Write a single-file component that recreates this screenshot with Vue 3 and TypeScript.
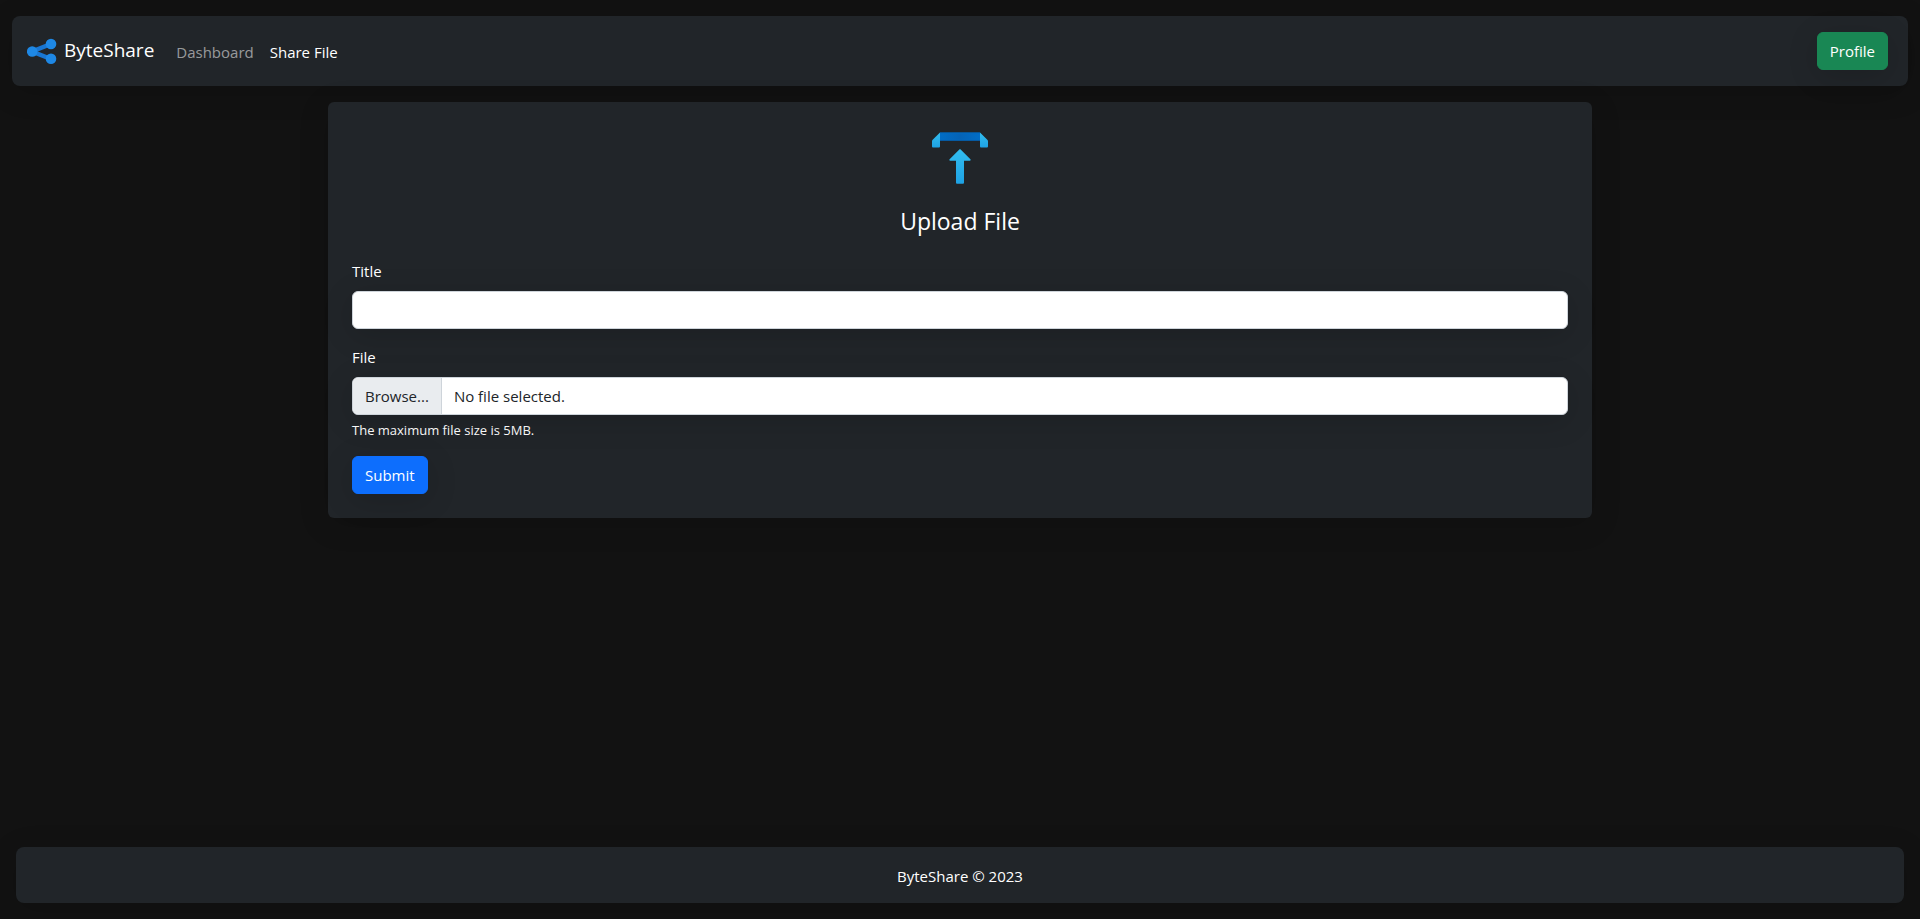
<script setup lang="ts">
import { computed, ref } from 'vue'

interface NavItem {
  label: string
  active: boolean
}

const navItems: NavItem[] = [
  { label: 'Dashboard', active: false },
  { label: 'Share File', active: true },
]

const title = ref('')
const fileName = ref('')
const fileText = computed(() => fileName.value || 'No file selected.')

function onFileChange(event: Event) {
  const input = event.target as HTMLInputElement
  fileName.value = input.files?.[0]?.name ?? ''
}
</script>

<template>
  <div class="page">
    <header class="navbar shadow">
      <a class="brand" href="#">
        <svg class="brand-icon" viewBox="0 0 30 26" aria-hidden="true">
          <path d="M24 6 5 13.500l19 7.500" fill="none" stroke="#1976d2" stroke-width="4.5" />
          <g fill="#1e88e5">
            <circle cx="5.2" cy="13.5" r="5.3" />
            <circle cx="24" cy="6" r="5.3" />
            <circle cx="24" cy="20.7" r="5.3" />
          </g>
        </svg>
        <span>ByteShare</span>
      </a>
      <nav class="nav">
        <a
          v-for="item in navItems"
          :key="item.label"
          class="nav-link"
          :class="{ active: item.active }"
          href="#"
        >{{ item.label }}</a>
      </nav>
      <button class="btn btn-success shadow" type="button">Profile</button>
    </header>

    <main class="main">
      <section class="card shadow">
        <svg class="upload-icon" viewBox="0 0 64 64" aria-hidden="true">
          <defs>
            <linearGradient id="bar" x1="0" x2="1" y1="0" y2="0">
              <stop offset="0" stop-color="#0077d2" />
              <stop offset="0.5" stop-color="#0b59a2" />
              <stop offset="1" stop-color="#0077d2" />
            </linearGradient>
            <linearGradient id="wing" x1="0" x2="0" y1="0" y2="1">
              <stop offset="0" stop-color="#32bdef" />
              <stop offset="1" stop-color="#1ea2e4" />
            </linearGradient>
          </defs>
          <rect x="12" y="6.3" width="40" height="8.5" fill="#0168c0" />
          <rect x="12" y="7.5" width="40" height="6.3" fill="url(#bar)" opacity="0.35" />
          <path d="M12 6.5v13.8c0 .8-.5 1.3-1.3 1.3H5.3c-.8 0-1.3-.5-1.3-1.3V15.5c0-.7.2-1.2.7-1.7z" fill="url(#wing)" />
          <path d="M52 6.5v13.8c0 .8.5 1.3 1.3 1.3h5.4c.8 0 1.3-.5 1.3-1.3V15.5c0-.7-.2-1.2-.7-1.7z" fill="url(#wing)" />
          <path d="M31.1 23.7 21.6 33.2c-.6.6-.2 1.5.6 1.5H28v21.7c0 .8.5 1.3 1.3 1.3h5.4c.8 0 1.3-.5 1.3-1.3V34.7h5.8c.8 0 1.2-.9.6-1.5l-9.5-9.5c-.5-.5-1.3-.5-1.8 0z" fill="url(#wing)" />
        </svg>
        <h1 class="heading">Upload File</h1>
        <form class="form" @submit.prevent>
          <div class="field">
            <label for="title">Title</label>
            <input id="title" v-model="title" class="control shadow" type="text" />
          </div>
          <div class="field">
            <label for="file">File</label>
            <div class="control file-control shadow">
              <span class="file-button">Browse...</span>
              <span class="file-name">{{ fileText }}</span>
              <input
                id="file"
                class="file-input"
                type="file"
                aria-describedby="file-help"
                @change="onFileChange"
              />
            </div>
            <small id="file-help" class="help">The maximum file size is 5MB.</small>
          </div>
          <button class="btn btn-primary shadow" type="submit">Submit</button>
        </form>
      </section>
    </main>

    <footer class="footer shadow">ByteShare © 2023</footer>
  </div>
</template>

<style>
body {
  margin: 0;
  background: #121212;
}
</style>

<style scoped>
*,
*::before,
*::after {
  box-sizing: border-box;
}

.page {
  display: flex;
  flex-direction: column;
  min-height: 100vh;
  padding: 16px 12px;
  overflow: hidden;
  color: #fff;
  background: #121212;
  font-family: "Segoe UI", "Open Sans", "Noto Sans", sans-serif;
  font-size: 15px;
  line-height: 24px;
}

.shadow {
  box-shadow: 0 6px 30px rgba(0, 0, 0, 0.15);
}

.navbar {
  display: flex;
  align-items: center;
  padding: 16px 20px 16px 15px;
  border-radius: 8px;
  background: #212529;
}

.brand {
  display: flex;
  align-items: center;
  gap: 7px;
  margin-right: 14px;
  color: #fff;
  font-size: 19px;
  line-height: 30px;
  text-decoration: none;
}

.brand span {
  padding-bottom: 2px;
}

.brand-icon {
  width: 30px;
  height: 26px;
}

.nav {
  display: flex;
  flex: 1;
}

.nav-link {
  padding: 8px 8px 6px;
  color: rgba(255, 255, 255, 0.55);
  text-decoration: none;
}

.nav-link.active {
  color: #fff;
}

.btn {
  padding: 6px 12px;
  border: 1px solid transparent;
  border-radius: 6px;
  color: #fff;
  font: inherit;
  cursor: pointer;
}

.btn-success {
  border-color: #198754;
  background: #198754;
}

.btn-primary {
  border-color: #0d6efd;
  background: #0d6efd;
}

.main {
  flex: 1;
  padding: 16px 0;
}

.card {
  display: flex;
  flex-direction: column;
  width: 66.6667%;
  margin: 0 auto;
  padding: 24px;
  border-radius: 6px;
  background: #212529;
}

.upload-icon {
  align-self: center;
  width: 64px;
  height: 64px;
}

.heading {
  margin: 16px 0 23px;
  font-size: 23px;
  font-weight: 400;
  line-height: 30px;
  text-align: center;
}

.field {
  display: flex;
  flex-direction: column;
  margin-bottom: 16px;
}

.field label {
  align-self: flex-start;
  margin-bottom: 8px;
}

.control {
  width: 100%;
  height: 38px;
  padding: 6px 12px;
  border: 1px solid #ced4da;
  border-radius: 6px;
  color: #212529;
  background: #fff;
  font: inherit;
}

.file-control {
  position: relative;
  display: flex;
  padding: 0;
  overflow: hidden;
}

.file-button {
  padding: 6px 12px;
  border-right: 1px solid #ced4da;
  background: #e9ecef;
}

.file-name {
  padding: 6px 12px;
}

.file-input {
  position: absolute;
  inset: 0;
  width: 100%;
  opacity: 0;
  cursor: pointer;
}

.help {
  margin-top: 5px;
  font-size: 13px;
  line-height: 20px;
}

.footer {
  margin: 0 4px;
  padding: 17px 16px 15px;
  border-radius: 8px;
  background: #212529;
  text-align: center;
}
</style>
